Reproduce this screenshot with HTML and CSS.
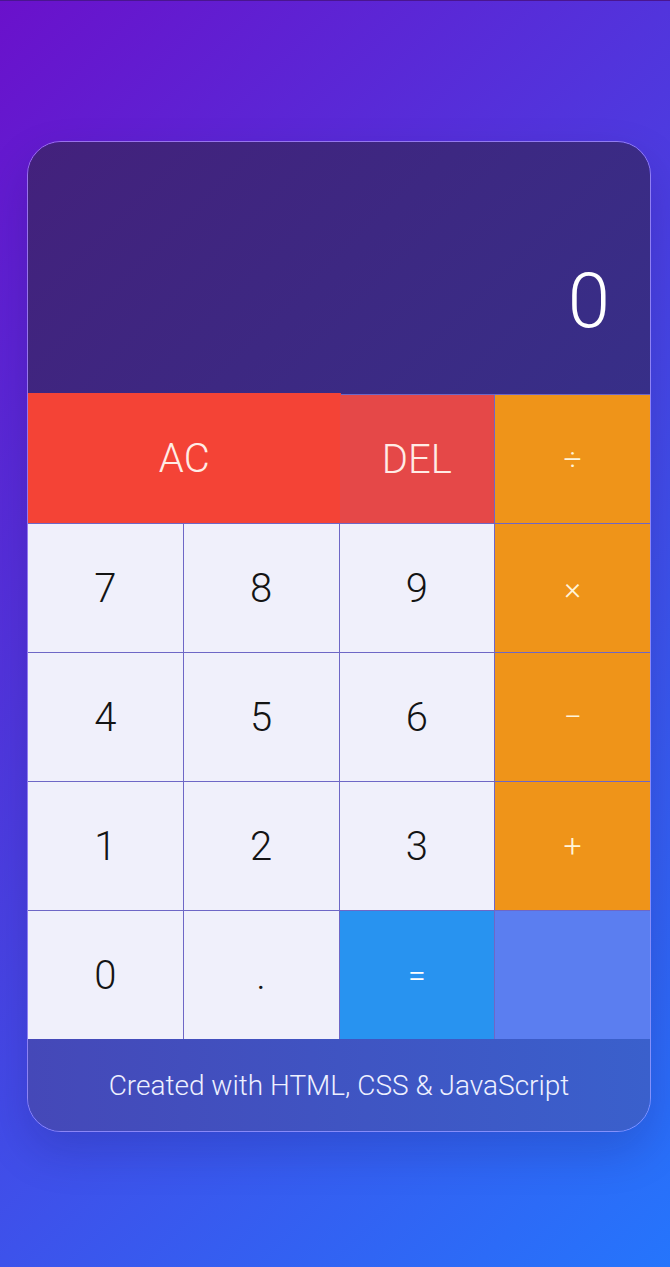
FILE: index.html
```html
<!DOCTYPE html>
<html lang="en">
<head>
<meta charset="utf-8">
<title>Calculator</title>
<link rel="stylesheet" href="styles.css">
</head>
<body>
<main class="calculator">
  <section class="display">
    <div class="current">0</div>
  </section>
  <section class="keys">
    <button class="key key-clear span-2">AC</button>
    <button class="key key-del">DEL</button>
    <button class="key key-op">÷</button>
    <button class="key">7</button>
    <button class="key">8</button>
    <button class="key">9</button>
    <button class="key key-op">×</button>
    <button class="key">4</button>
    <button class="key">5</button>
    <button class="key">6</button>
    <button class="key key-op">−</button>
    <button class="key">1</button>
    <button class="key">2</button>
    <button class="key">3</button>
    <button class="key key-op">+</button>
    <button class="key">0</button>
    <button class="key">.</button>
    <button class="key key-eq">=</button>
    <div class="key-empty"></div>
  </section>
  <footer class="credit">Created with HTML, CSS &amp; JavaScript</footer>
</main>
</body>
</html>
```

FILE: styles.css
```css
* { box-sizing: border-box; }

html, body {
  margin: 0;
  height: 100%;
}

body {
  min-height: 1267px;
  background: linear-gradient(135deg, #6a11cb 0%, #2575fc 100%);
  font-family: Roboto, "Noto Sans", sans-serif;
  padding: 141px 0 0 27px;
  border-top: 1px solid #4a1590;
}

.calculator {
  width: 624px;
  border: 1px solid rgba(190, 170, 255, 0.6);
  border-radius: 34px;
  overflow: hidden;
  display: flex;
  flex-direction: column;
  box-shadow: 0 20px 45px rgba(20, 10, 80, 0.18);
  margin-top: -1px;
}

.display {
  height: 252px;
  background: linear-gradient(135deg, #43217c 0%, #372f88 100%);
  display: flex;
  flex-direction: column;
  justify-content: flex-end;
  align-items: flex-end;
  padding: 0 40px 55px;
}

.current {
  color: #ffffff;
  font-size: 76px;
  font-weight: 300;
  line-height: 1;
}

.keys {
  display: grid;
  grid-template-columns: repeat(4, 1fr);
  grid-auto-rows: 128px;
  gap: 1px;
  padding-top: 1px;
  background: #6e67c6;
}

.key {
  border: 0;
  margin: 0;
  padding: 0;
  background: #f0f0fb;
  color: #141414;
  font-family: Roboto, "Noto Sans", sans-serif;
  font-size: 40px;
  font-weight: 300;
  display: flex;
  align-items: center;
  justify-content: center;
}

.span-2 { grid-column: span 2; }

.key-clear {
  background: #f44336;
  color: #ffece6;
  margin: -2px -2px 0 0;
}

.key-del {
  background: #e54848;
  color: #ffece6;
}

.key-op {
  background: #ef9419;
  color: #fff4da;
  font-size: 32px;
}

.key-eq {
  background: #2893f0;
  color: #ffffff;
  font-size: 32px;
}

.key-empty {
  background: #5b7ef0;
}

.credit {
  height: 92px;
  display: flex;
  align-items: center;
  justify-content: center;
  background: linear-gradient(90deg, #4548b8 0%, #3a60cc 100%);
  color: #eef0ff;
  font-size: 28px;
  font-weight: 300;
}
```
